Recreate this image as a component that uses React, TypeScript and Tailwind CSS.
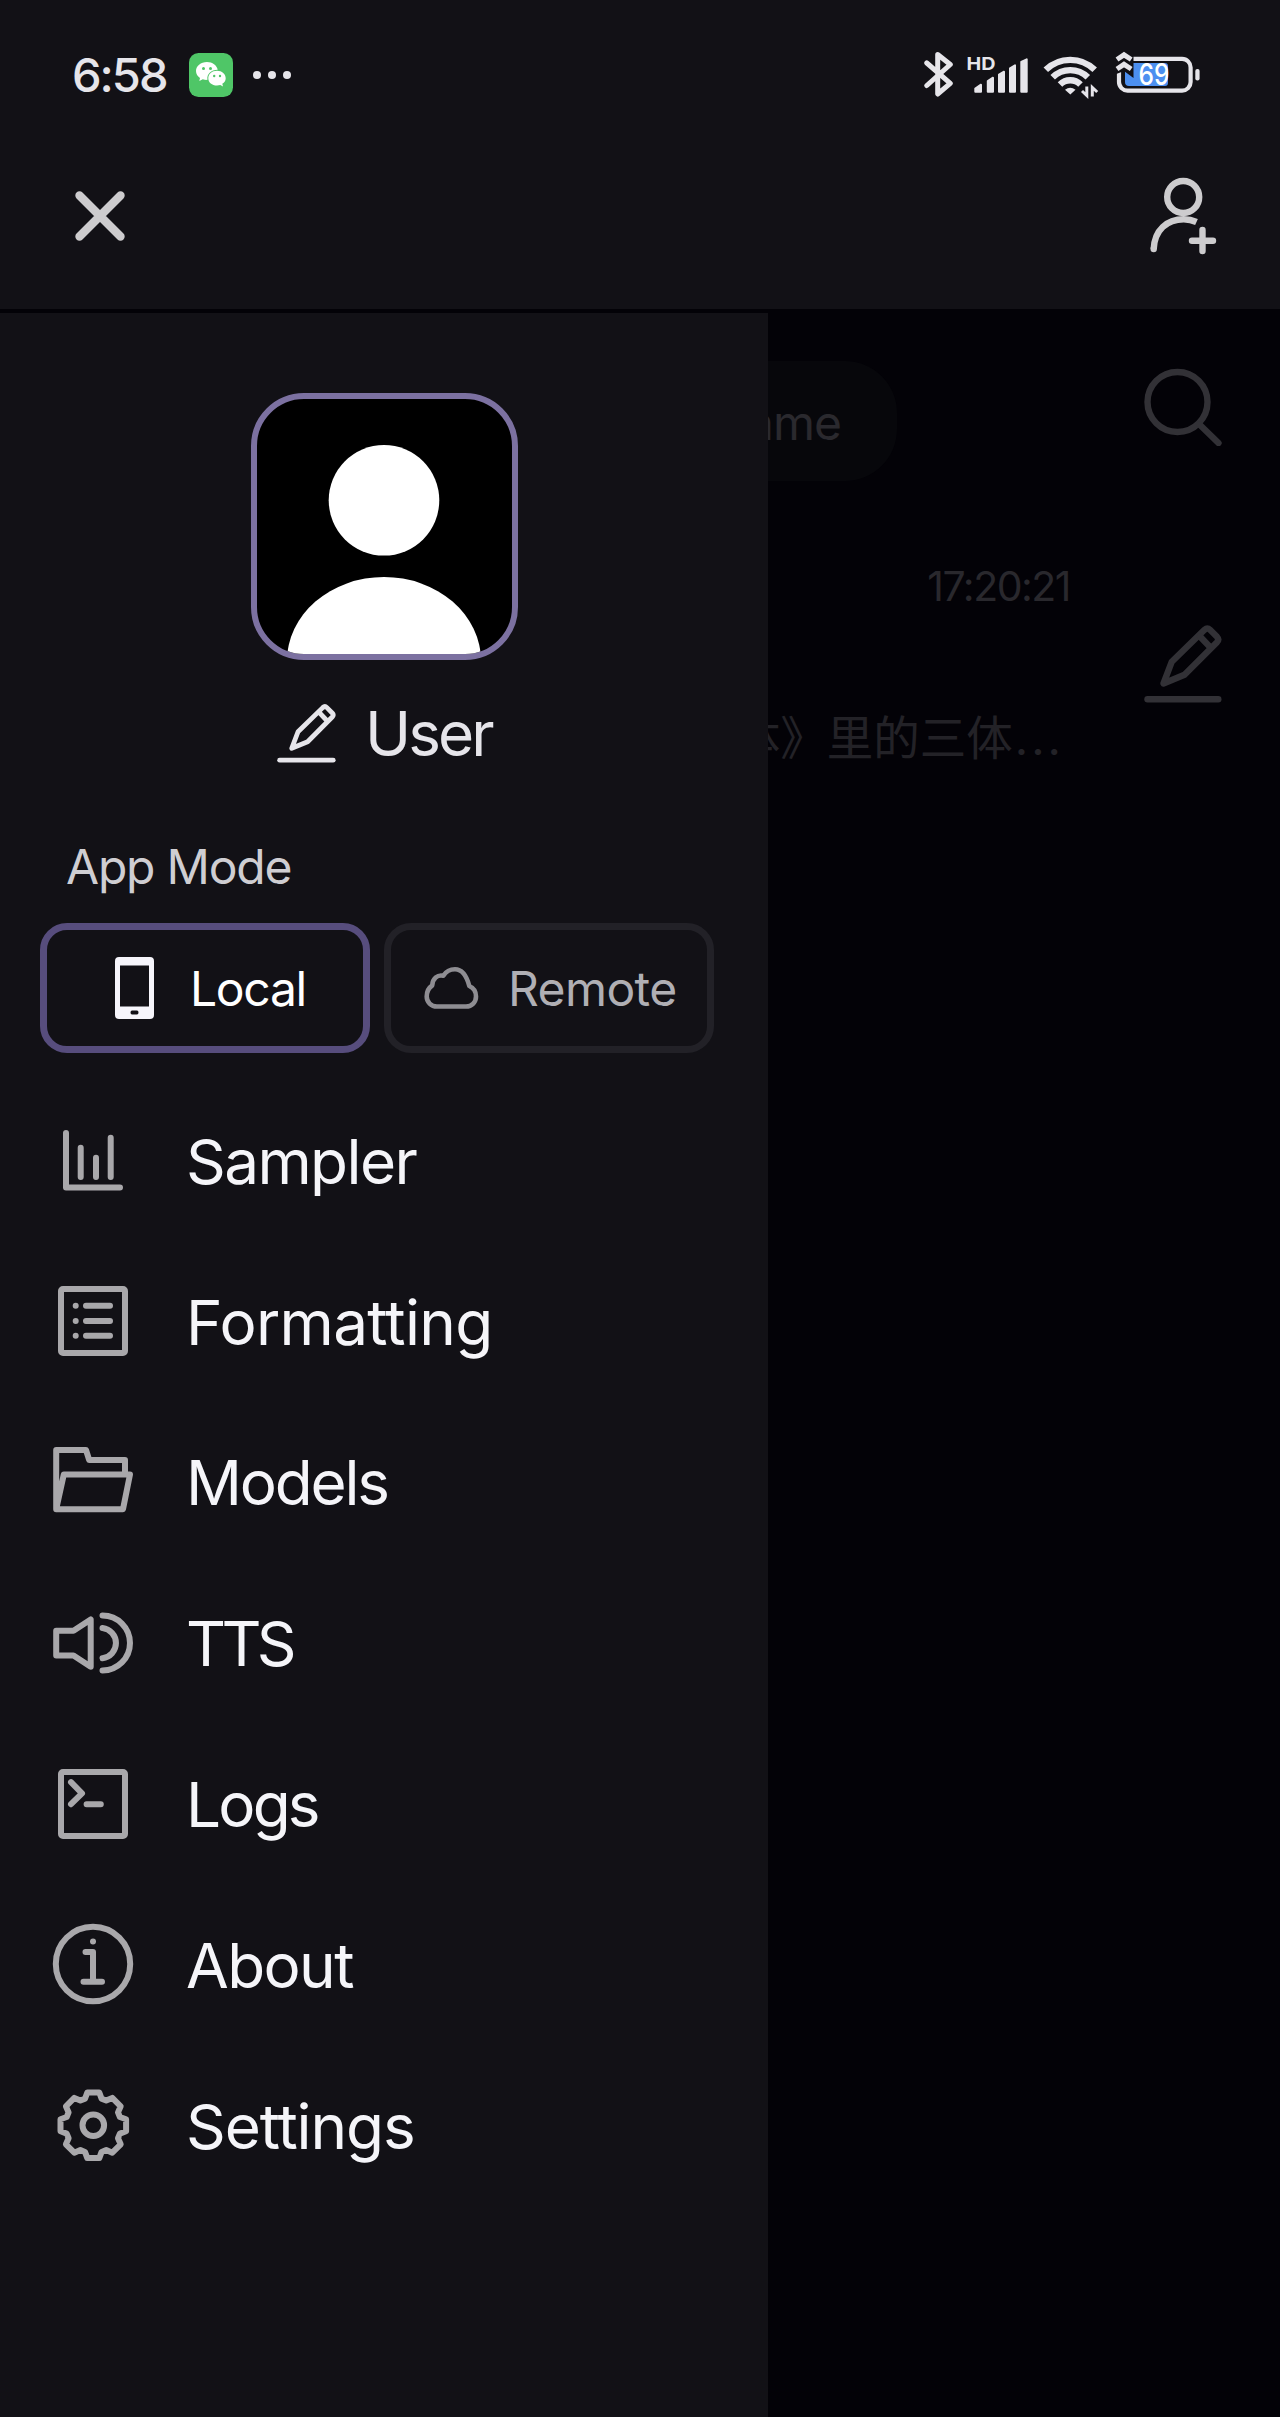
import type { ReactNode } from 'react';

const MENU_ITEMS: { label: string; tracking: string; icon: ReactNode }[] = [
  {
    label: 'Sampler',
    tracking: 'tracking-[-1.6px]',
    icon: <path d="M13 13V67.5H67M27.7 27.8V57M43 37.8V57M57.7 17.8V57" />,
  },
  {
    label: 'Formatting',
    tracking: 'tracking-[-0.7px]',
    icon: (
      <>
        <rect x="8" y="8" width="64" height="64" rx="2" />
        <path d="M33 24.7H57M33 40H57M33 54.8H57M22.7 24.7h.01M22.7 40h.01M22.7 54.8h.01" />
      </>
    ),
  },
  {
    label: 'Models',
    tracking: 'tracking-[-2.2px]',
    icon: <path d="M3.2 67.2V8H33L36.2 18H72V32.5M3.2 67.2L10.8 32.5H77L70 67.2Z" />,
  },
  {
    label: 'TTS',
    tracking: 'tracking-[-4.6px]',
    icon: (
      <path d="M3.2 27.7H20.5L37.7 16.5V63.8L20.5 52.5H3.2ZM49.5 12.5A27.5 27.5 0 0 1 49.5 67.5M49.5 25A15.2 15.2 0 0 1 49.5 55.2" />
    ),
  },
  {
    label: 'Logs',
    tracking: 'tracking-[-2.8px]',
    icon: (
      <>
        <rect x="8" y="8" width="64" height="64" rx="2" />
        <path d="M18 18.2L29 29.4L18 40.2M33.6 40.2H47.8" />
      </>
    ),
  },
  {
    label: 'About',
    tracking: 'tracking-[-1.6px]',
    icon: (
      <>
        <circle cx="40" cy="40" r="37.2" />
        <path d="M32.5 28H40V57.8M30.5 57.8H49M40 17.4h.01" />
      </>
    ),
  },
  {
    label: 'Settings',
    tracking: 'tracking-[-1.1px]',
    icon: (
      <>
        <circle cx="40.3" cy="40.3" r="10.8" />
        <path d={gearPath()} />
      </>
    ),
  },
];

// Eight teeth around the centre of an 80x80 box
function gearPath() {
  const points: string[] = [];
  for (let i = 0; i < 8; i++) {
    const a = (i * Math.PI) / 4;
    for (const [x, y] of [[-8.3, -26.6], [-6, -32.8], [6, -32.8], [8.3, -26.6]]) {
      const px = 40.3 + x * Math.cos(a) - y * Math.sin(a);
      const py = 40.3 + x * Math.sin(a) + y * Math.cos(a);
      points.push(`${px.toFixed(1)} ${py.toFixed(1)}`);
    }
  }
  return `M${points.join('L')}Z`;
}

function EditIcon({ className }: { className: string }) {
  return (
    <svg
      viewBox="0 0 78 78"
      className={className}
      fill="none"
      stroke="currentColor"
      strokeWidth="6.4"
      strokeLinecap="round"
      strokeLinejoin="round"
    >
      <path d="M19.5 58.5L27.8 36.7L60.5 4.8Q63.3 2.2 66 4.8L73 11.8Q75.5 14.5 73 17.2L40.5 49.8Z" />
      <path d="M56 11.5L65.5 21.5" />
      <path d="M3.5 74.3H74.3" />
    </svg>
  );
}

function StatusBar() {
  return (
    <div className="flex h-[150px] items-center pl-[72px] pr-[78px] text-[#e6e5ea]">
      <span className="w-[117px] pb-0.5 text-[47px] font-medium leading-none tracking-[-2px]">6:58</span>
      <svg width="44" height="44" viewBox="0 0 44 44">
        <rect width="44" height="44" rx="9.5" fill="#4fc667" />
        <path
          fill="#fff"
          d="M18 9C11.7 9 7 13 7 18C7 21 8.5 23.3 11 25L10.3 28L13.8 26.2C15.5 26.8 17 27 18.5 26.8C17.5 21 22 16.8 28.7 16.7C27.8 12.3 23.5 9 18 9Z"
        />
        <path
          fill="#fff"
          d="M28 17.8C22.8 17.8 19.3 21 19.3 25.2C19.3 29.5 23 32.5 28 32.5C29.2 32.5 30.3 32.3 31.3 32L34 33.5L33.3 30.8C35.5 29.5 36.7 27.5 36.7 25.2C36.7 21 33 17.8 28 17.8Z"
        />
        <g fill="#4fc667">
          <circle cx="14.5" cy="15.5" r="1.5" />
          <circle cx="21.5" cy="15.5" r="1.5" />
          <circle cx="25.2" cy="23" r="1.2" />
          <circle cx="31" cy="23" r="1.2" />
        </g>
      </svg>
      <div className="ml-5 flex gap-[7px]">
        <span className="size-2 rounded-full bg-current" />
        <span className="size-2 rounded-full bg-current" />
        <span className="size-2 rounded-full bg-current" />
      </div>

      <div className="ml-auto flex">
        <svg width="30" height="48" viewBox="0 0 30 48" fill="none" stroke="currentColor" strokeWidth="5" strokeLinejoin="round" strokeLinecap="round">
          <path d="M2.8 12L26.3 32.3L13.7 43V3.5L26.3 13.5L2.8 34.5" />
        </svg>
        <svg width="62" height="48" viewBox="0 0 62 48" className="ml-[13px]" fill="currentColor">
          <text x="-0.5" y="19.3" fontSize="18" fontWeight="700" textLength="29" lengthAdjust="spacingAndGlyphs">HD</text>
          <g stroke="currentColor" strokeLinejoin="round" strokeWidth="2">
            <path d="M8.3 40.7V37.5L14 33.7V40.7Z" />
            <path d="M20.8 40.7V30L26 26.7V40.7Z" />
            <path d="M32 40.7V23.5L37 20.7V40.7Z" />
            <path d="M43 40.7V17.3L48 14.3V40.7Z" />
            <path d="M54.3 40.7V11L59.7 8.3V40.7Z" />
          </g>
        </svg>
        <svg width="58" height="48" viewBox="0 0 58 48" className="ml-[14px]" fill="none" stroke="currentColor" strokeWidth="6.4">
          <path d="M2.8 18.8A35 35 0 0 1 51.7 18.8" />
          <path d="M9.7 26.3A25 25 0 0 1 44.8 26.3" />
          <path d="M17 33.5A14.5 14.5 0 0 1 37.5 33.5" />
          <path d="M22 38.8Q27.3 34.5 32.5 38.8L27.3 43.5Z" fill="currentColor" stroke="none" />
          <path d="M43.8 35.5V44.5L39 40M49.3 45.5V36.5L54.2 41" strokeWidth="3" />
        </svg>
        <svg width="87" height="48" viewBox="0 0 87 48" className="ml-[14px]">
          <rect x="4" y="7.9" width="71.6" height="31.7" rx="8.5" fill="none" stroke="currentColor" strokeWidth="4.2" />
          <path d="M10 12H50Q53 12 53 15V32Q53 35 50 35H14Q10 35 10 31Z" fill="#4c8ff0" />
          <rect x="80.3" y="18" width="4.3" height="11.5" rx="2" fill="currentColor" />
          <path d="M-1 0H18.5V27L9 20L-1 24Z" fill="#121116" />
          <path d="M2 8.5L9 3.8L16.2 8.5M2 18L9 13.3L16.2 18" fill="none" stroke="currentColor" strokeWidth="5" />
          <text x="23.5" y="34.4" fontSize="29.5" fontWeight="500" textLength="31" lengthAdjust="spacingAndGlyphs" fill="#fff">69</text>
        </svg>
      </div>
    </div>
  );
}

function Toolbar() {
  return (
    <div className="flex h-[132px] items-center justify-between pl-[75px] pr-[62px] text-[#cdccce]">
      <button aria-label="Close drawer">
        <svg width="50" height="50" viewBox="0 0 50 50" fill="none" stroke="currentColor" strokeWidth="8.4" strokeLinecap="round">
          <path d="M4.5 4.5L45.5 45.5M45.5 4.5L4.5 45.5" />
        </svg>
      </button>
      <button aria-label="Add user">
        <svg width="68" height="78" viewBox="0 0 68 78" fill="none" stroke="currentColor" strokeWidth="6.4" strokeLinecap="round">
          <circle cx="33.2" cy="20" r="16" />
          <path d="M3.7 72C4.5 53 17 42.2 33.7 42.2Q40.5 42.2 46.5 45" strokeLinecap="butt" />
          <path d="M3.7 72v.01" />
          <path d="M42 63.7H63M52.5 53V74" />
        </svg>
      </button>
    </div>
  );
}

// Chat list underneath the drawer, already dimmed
function ChatList() {
  return (
    <div className="flex h-full flex-col items-end bg-[#030207]">
      <div className="flex h-[172px] items-end pr-[58px]">
        <div className="flex h-[120px] w-[560px] items-center justify-end rounded-[52px] bg-[#07070b] pr-[56px] pt-[3px] text-[48px] tracking-[-1px] text-[#2a292e]">
          Sort by: Name
        </div>
        <svg width="78" height="78" viewBox="0 0 78 78" className="mb-[35px] ml-[247px]" fill="none" stroke="#323136" strokeWidth="6.4" strokeLinecap="round">
          <circle cx="33.5" cy="34" r="30" />
          <path d="M55.5 56.5L74.5 75" />
        </svg>
      </div>
      <div className="flex w-full items-center justify-end pr-[58px] pt-[75px]">
        <div className="flex w-[640px] flex-col items-end pr-[74px]">
          <span className="text-[41px] leading-[60px] tracking-[-1.5px] text-[#29282d]">17:20:21</span>
          <p className="mt-[89px] flex w-[446px] justify-end whitespace-nowrap pr-[6px] text-[46.5px] leading-[66px] text-[#232227]">
            《三体》里的三体<span className="pl-0.5 tracking-[3px]">...</span>
          </p>
        </div>
        <EditIcon className="mt-px size-[78px] text-[#323136]" />
      </div>
    </div>
  );
}

function Drawer() {
  return (
    <aside className="absolute bottom-0 left-0 top-1 w-[768px] bg-[#121116] pt-[80px]">
      <div className="mx-auto size-[267px] overflow-hidden rounded-[53px] border-[6px] border-[#7c71a1] bg-black">
        <svg viewBox="0 0 255 255" className="size-full" fill="#fff">
          <circle cx="127" cy="101.3" r="55.3" />
          <ellipse cx="127" cy="262" rx="97" ry="84" />
        </svg>
      </div>

      <div className="mt-[37px] flex h-[72px] items-center gap-[29px] pl-[277px] text-[#e6e5ea]">
        <EditIcon className="size-[59px]" />
        <span className="pt-0.5 text-[62px] leading-none tracking-[-2.9px]">User</span>
      </div>

      <h2 className="mt-[68px] pl-[66px] text-[48px] leading-[60px] tracking-[-1.2px] text-[#cfced2]">App Mode</h2>

      <div className="mt-[26px] flex h-[130px] gap-[14px] pl-10 text-[48px]">
        <button className="flex w-[330px] items-center rounded-[27px] border-[7px] border-[#574d7d] pl-[68px] text-white">
          <svg width="39" height="62" viewBox="0 0 39 62" fillRule="evenodd" fill="#f6f5fb">
            <path d="M4 0H35Q39 0 39 4V58Q39 62 35 62H4Q0 62 0 58V4Q0 0 4 0ZM5 8.5V49.5H34V8.5ZM17 53.5Q15.5 53.5 15.5 55.5Q15.5 57.5 17 57.5H22Q23.5 57.5 23.5 55.5Q23.5 53.5 22 53.5Z" />
          </svg>
          <span className="ml-[36px] pt-0.5 tracking-[-1.3px]">Local</span>
        </button>
        <button className="flex w-[330px] items-center rounded-[27px] border-[7px] border-[#222127] pl-[33px] text-[#b0afb4]">
          <svg width="55" height="44" viewBox="0 0 55 44" fill="none" stroke="#8e8d92" strokeWidth="4.6" strokeLinejoin="round">
            <path d="M13 40.5H42C48 40.5 52 36 52 30.5C52 25.5 49.5 21.8 45.3 20C42.5 9.5 38 3.3 31 3.3C26 3.3 22 5.5 19.3 9.8C13.5 8.5 8.5 12.5 8.2 19.5C4.5 22 2.7 25.5 2.7 30.5C2.7 36 7 40.5 13 40.5Z" />
          </svg>
          <span className="ml-[29px] pt-0.5 tracking-[-0.6px]">Remote</span>
        </button>
      </div>

      <nav className="mt-[27px]">
        {MENU_ITEMS.map((item) => (
          <button key={item.label} className="flex h-[160.8px] w-full items-center gap-[53px] pl-[53px]">
            <svg
              width="80"
              height="80"
              viewBox="0 0 80 80"
              className="overflow-visible text-[#a9a8ab]"
              fill="none"
              stroke="currentColor"
              strokeWidth="6"
              strokeLinecap="round"
              strokeLinejoin="round"
            >
              {item.icon}
            </svg>
            <span className={`pt-[3px] text-[62px] leading-none text-[#f5f5f9] ${item.tracking}`}>{item.label}</span>
          </button>
        ))}
      </nav>
    </aside>
  );
}

export default function App() {
  return (
    <div className="flex h-[2417px] w-[1280px] flex-col overflow-hidden bg-black font-[Inter,'Noto_Sans_CJK_SC',sans-serif]">
      <header className="h-[309px] shrink-0 bg-[#121116]">
        <StatusBar />
        <Toolbar />
      </header>
      <main className="relative flex-1">
        <ChatList />
        <Drawer />
      </main>
    </div>
  );
}
